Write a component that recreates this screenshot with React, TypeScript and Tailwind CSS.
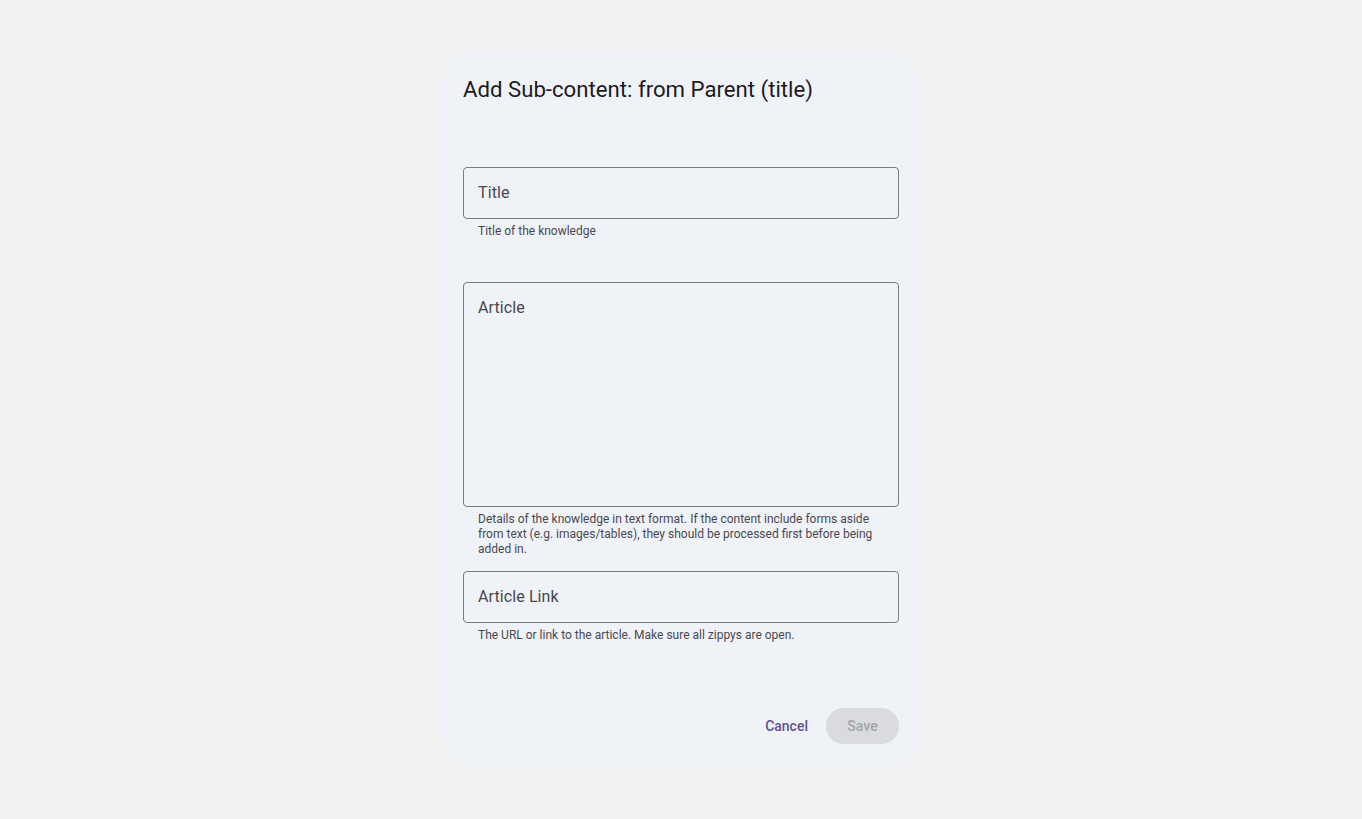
import React from "react";

function Field({ label, helper, tall }: { label: string; helper: React.ReactNode; tall?: boolean }) {
  return (
    <div className="flex flex-col">
      <div
        className={`border border-[#7c7c80] rounded-[4px] px-[14px] ${tall ? "h-[225px] pt-[13px]" : "h-[52px] flex items-center"}`}
      >
        <span className="text-[16px] leading-[24px] text-[#48474c] tracking-[0.1px]">{label}</span>
      </div>
      <div className="px-[15px] pt-[5px] text-[12px] leading-[15px] text-[#4a4950]">{helper}</div>
    </div>
  );
}

export default function App() {
  return (
    <div
      className="w-full h-[819px] bg-[#f1f1f1] flex justify-center pt-[53px]"
      style={{ fontFamily: "Roboto, 'Noto Sans', sans-serif" }}
    >
      <div className="w-[478px] h-[713px] bg-[#eff2f7] rounded-[28px] px-[21px] pt-[73px] relative flex flex-col">
        <h1 className="absolute left-[21px] top-[20px] text-[22.2px] leading-[32px] text-[#1c1b1f] font-normal">
          Add Sub-content: from Parent (title)
        </h1>
        <div className="mt-[41px]">
          <Field label="Title" helper="Title of the knowledge" />
        </div>
        <div className="mt-[43px]">
          <Field
            label="Article"
            tall
            helper="Details of the knowledge in text format. If the content include forms aside from text (e.g. images/tables), they should be processed first before being added in."
          />
        </div>
        <div className="mt-[14px]">
          <Field label="Article Link" helper="The URL or link to the article. Make sure all zippys are open." />
        </div>
        <div className="mt-auto mb-[22px] flex justify-end items-center gap-[8px]">
          <button className="h-[36px] px-[10px] text-[14px] font-medium text-[#5f5290]">Cancel</button>
          <button className="h-[36px] w-[73px] rounded-full bg-[#d9dbe0] text-[14px] font-medium text-[#a3a4a8]">
            Save
          </button>
        </div>
      </div>
    </div>
  );
}
